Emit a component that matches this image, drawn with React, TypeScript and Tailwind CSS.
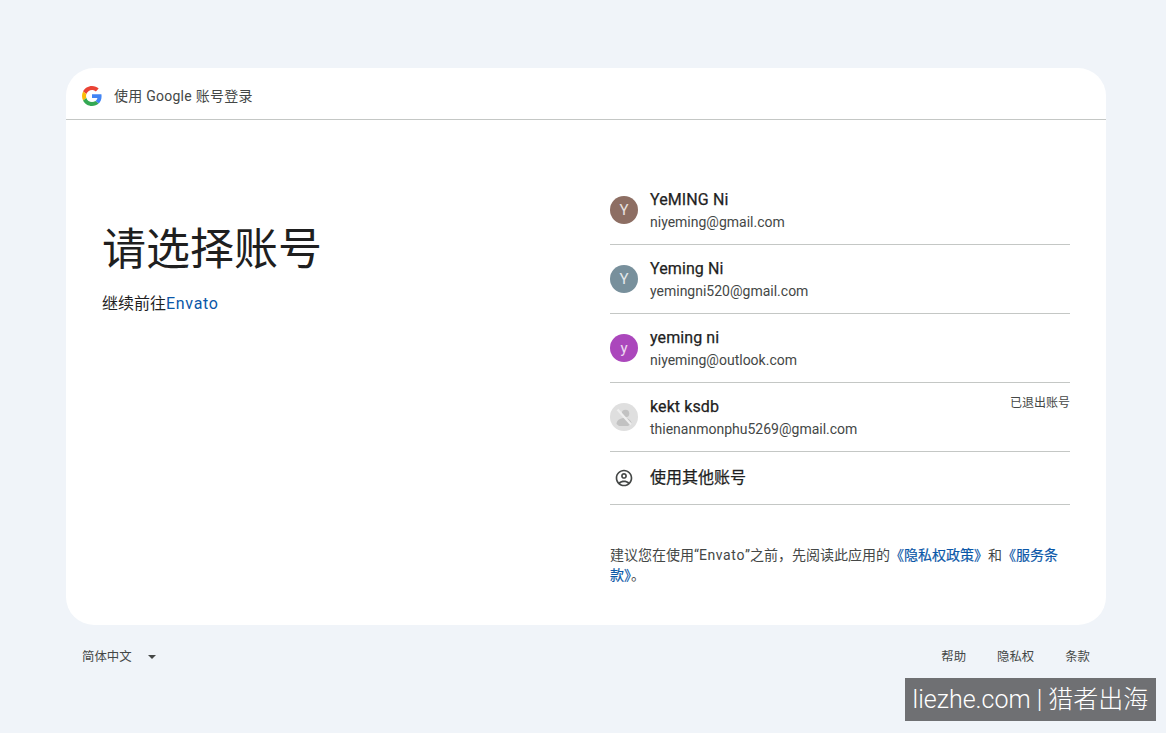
const FONT = "font-['Roboto','Noto_Sans_CJK_SC',sans-serif]";

function GoogleLogo() {
  return (
    <svg viewBox="0 0 48 48" className="w-5 h-5 shrink-0">
      <path fill="#EA4335" d="M24 9.5c3.54 0 6.71 1.22 9.21 3.6l6.85-6.85C35.9 2.38 30.47 0 24 0 14.62 0 6.51 5.38 2.56 13.22l7.98 6.19C12.43 13.72 17.74 9.5 24 9.5z" />
      <path fill="#4285F4" d="M46.98 24.55c0-1.57-.15-3.09-.38-4.55H24v9.02h12.94c-.58 2.96-2.26 5.48-4.78 7.18l7.73 6c4.51-4.18 7.09-10.36 7.09-17.65z" />
      <path fill="#FBBC05" d="M10.53 28.59c-.48-1.45-.76-2.99-.76-4.59s.27-3.14.76-4.59l-7.98-6.19C.92 16.46 0 20.12 0 24c0 3.88.92 7.54 2.56 10.78l7.97-6.19z" />
      <path fill="#34A853" d="M24 48c6.48 0 11.93-2.13 15.89-5.81l-7.73-6c-2.15 1.45-4.92 2.3-8.16 2.3-6.26 0-11.57-4.22-13.47-9.91l-7.98 6.19C6.51 42.62 14.62 48 24 48z" />
    </svg>
  );
}

function Letter({ c, bg }: { c: string; bg: string }) {
  return (
    <div className={`w-7 h-7 rounded-full flex items-center justify-center text-white/80 text-[15px] shrink-0 ${bg}`}>
      {c}
    </div>
  );
}

function SignedOutAvatar() {
  return (
    <svg viewBox="0 0 28 28" className="w-7 h-7 shrink-0">
      <circle cx="14" cy="14" r="14" fill="#dfdfdf" />
      <circle cx="15.5" cy="10.5" r="3.8" fill="#c2c2c2" />
      <path d="M6.5 21c0-3.8 3.8-6 7.8-6 3.6 0 6.8 1.9 7.3 5.4L18 23H9z" fill="#c2c2c2" />
      <path d="M7.5 6.5 21 21.5" stroke="#efefef" strokeWidth="2.2" />
    </svg>
  );
}

function Account({ avatar, name, email, note }: { avatar: React.ReactNode; name: string; email: string; note?: string }) {
  return (
    <div className="h-[69px] border-b border-[#c4c7c5] flex items-center gap-3 relative">
      {avatar}
      <div className="flex flex-col gap-[2px] pt-[2px]">
        <div className="text-base leading-5 tracking-[0.1px] text-[#1f1f1f] [-webkit-text-stroke:0.25px_#1f1f1f]">{name}</div>
        <div className="text-sm leading-5 text-[#444746]">{email}</div>
      </div>
      {note && <div className="absolute right-0 top-[12px] text-xs leading-4 text-[#444746]">{note}</div>}
    </div>
  );
}

export default function App() {
  return (
    <div className={`${FONT} relative min-h-[733px] bg-[#f0f4f9] pt-[68px] px-[60px] overflow-hidden`}>
      <div className="w-[1040px] ml-[6px] h-[557px] bg-white rounded-[28px] flex flex-col">
        <div className="h-[52px] shrink-0 border-b border-[#c4c7c5] flex items-center gap-3 pl-4 pt-[4px]">
          <GoogleLogo />
          <span className="text-sm tracking-[0.25px] text-[#444746]">使用 Google 账号登录</span>
        </div>
        <div className="flex flex-1 pl-9 pr-9">
          <div className="w-[508px] shrink-0 pt-[102px]">
            <h1 className="text-[44px] leading-[56px] text-[#1f1f1f]">请选择账号</h1>
            <p className="mt-[14px] text-base leading-6 text-[#1f1f1f]">
              继续前往<span className="tracking-[0.7px] text-[#0b57a8]">Envato</span>
            </p>
          </div>
          <div className="w-[460px] pt-[56px]">
            <Account avatar={<Letter c="Y" bg="bg-[#8d6e63]" />} name="YeMING Ni" email="niyeming@gmail.com" />
            <Account avatar={<Letter c="Y" bg="bg-[#78909c]" />} name="Yeming Ni" email="yemingni520@gmail.com" />
            <Account avatar={<Letter c="y" bg="bg-[#ab47bc]" />} name="yeming ni" email="niyeming@outlook.com" />
            <Account avatar={<SignedOutAvatar />} name="kekt ksdb" email="thienanmonphu5269@gmail.com" note="已退出账号" />
            <div className="h-[53px] border-b border-[#c4c7c5] flex items-center gap-4 pl-1">
              <svg viewBox="0 0 24 24" className="w-5 h-5 fill-[#444746] shrink-0">
                <path d="M12 2C6.48 2 2 6.48 2 12s4.48 10 10 10 10-4.48 10-10S17.52 2 12 2zM7.35 18.5C8.66 17.56 10.26 17 12 17s3.34.56 4.65 1.5C15.34 19.44 13.74 20 12 20s-3.34-.56-4.65-1.5zm10.79-1.38C16.45 15.8 14.32 15 12 15s-4.45.8-6.14 2.12C4.7 15.73 4 13.95 4 12c0-4.42 3.58-8 8-8s8 3.58 8 8c0 1.95-.7 3.73-1.86 5.12zM12 6c-1.93 0-3.5 1.57-3.5 3.5S10.07 13 12 13s3.5-1.57 3.5-3.5S13.93 6 12 6zm0 5c-.83 0-1.5-.67-1.5-1.5S11.17 8 12 8s1.5.67 1.5 1.5S12.83 11 12 11z" />
              </svg>
              <span className="text-base text-[#1f1f1f] [-webkit-text-stroke:0.25px_#1f1f1f]">使用其他账号</span>
            </div>
            <p className="mt-[40px] text-sm leading-5 text-[#444746]">
              建议您在使用“<span className="tracking-[0.6px]">Envato</span>”之前{"\uFF0C"}先阅读此应用的
              <span className="text-[#0b57a8] [-webkit-text-stroke:0.2px_#0b57a8]">《隐私权政策》</span>和
              <span className="text-[#0b57a8] [-webkit-text-stroke:0.2px_#0b57a8]">《服务条款》</span>。
            </p>
          </div>
        </div>
      </div>
      <div className="w-[1040px] ml-[6px] h-[32px] mt-[16px] flex items-center justify-between pl-4 pr-4 text-[12.4px] text-[#444746]">
        <div className="flex items-center gap-4">
          <span>简体中文</span>
          <span className="w-0 h-0 border-x-[4.5px] border-x-transparent border-t-[4.5px] border-t-[#444746]" />
        </div>
        <div className="flex items-center gap-[31px]">
          <span>帮助</span>
          <span>隐私权</span>
          <span>条款</span>
        </div>
      </div>
      <div className="absolute left-[905px] top-[678px] w-[251px] h-[43px] bg-[#6f7073] pt-[1px] flex items-center justify-center text-white text-[25px] font-light whitespace-nowrap">
        liezhe.com | 猎者出海
      </div>
    </div>
  );
}
